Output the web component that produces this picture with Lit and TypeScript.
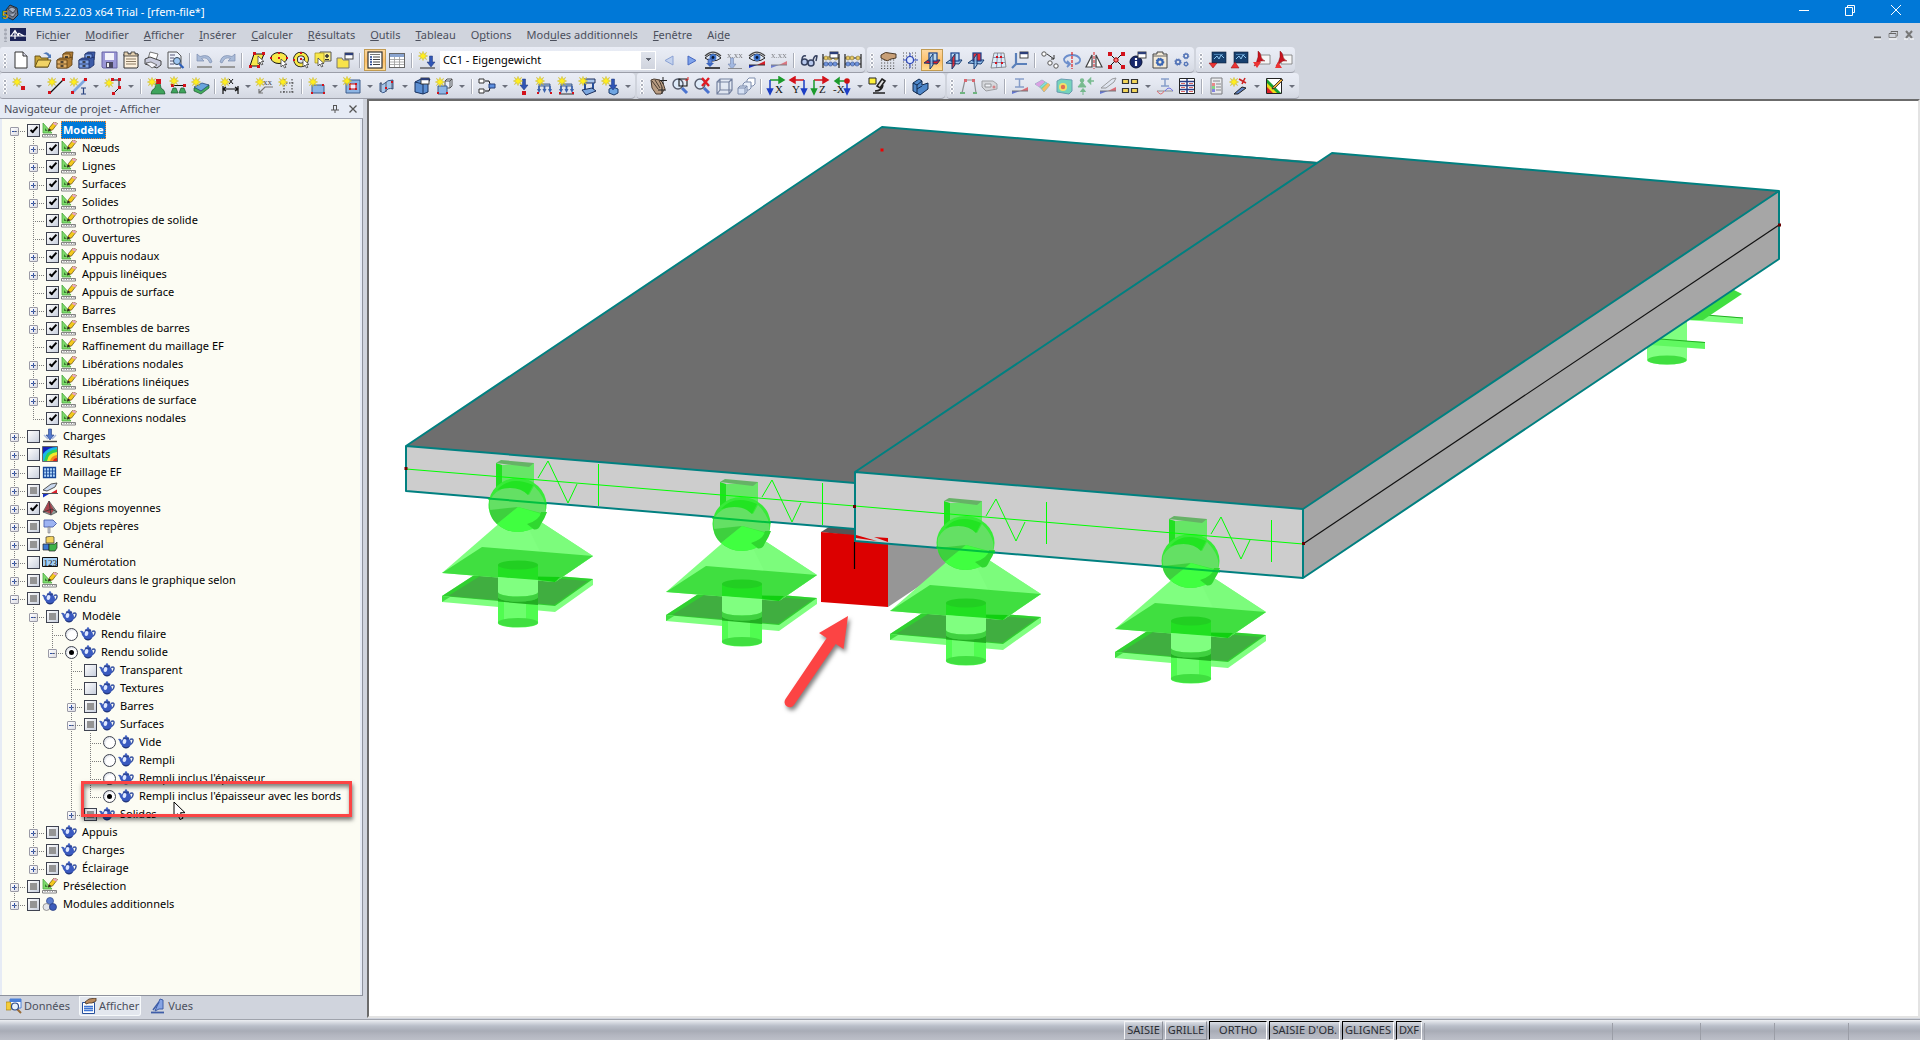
import { LitElement, html, css, svg, nothing } from "lit";
import type { TemplateResult, SVGTemplateResult } from "lit";
import { customElement, property, state } from "lit/decorators.js";
import { classMap } from "lit/directives/class-map.js";

type Art = SVGTemplateResult;

/* ---------- shared pieces of the toolbar glyphs (20 x 20 grid) ---------- */
const star = (x = 5, y = 5) => svg`<path transform="translate(${x} ${y})" d="M0-4.6L1-1.800 3.600-3.600 1.900-1 4.6 0 1.900 1 3.600 3.600 1 1.800 0 4.6-1 1.800-3.600 3.600-1.900 1-4.6 0-1.900-1-3.600-3.600-1-1.800z" fill="#ffee1e" stroke="#c9b62a" stroke-width=".5"/>`;
const red = (x: number, y: number, s = 3) => svg`<rect x=${x} y=${y} width=${s} height=${s} fill="#d3121b"/>`;
const cursor = (x: number, y: number) => svg`<path transform="translate(${x} ${y})" d="M0 0v8l2-2 1.500 3 1.400-.7L3.500 5.500H6z" fill="#fff" stroke="#444" stroke-width=".8"/>`;
const cabinet = (a: string, b: string, c: string) => svg`<path d="M8 4l3-2h7l-1 8-4 2H8z" fill=${b} stroke=${c} stroke-width=".8"/><path d="M8 4h7v6H8z" fill=${a} stroke=${c} stroke-width=".8"/><path d="M2 10l3-2h9l3-1v8l-4 3H2z" fill=${b} stroke=${c} stroke-width=".8"/><path d="M2 10h10v8H2z" fill=${a} stroke=${c} stroke-width=".8"/><path d="M2 14h10" stroke=${c} stroke-width=".8"/><path d="M5.500 12h3M5.500 16h3M10 7h3" stroke="#222" stroke-width="1.300"/>`;
const downArrow = (x: number, y: number, c = "#2f55b5") => svg`<path transform="translate(${x} ${y})" d="M-1.500 0h3v6h2.500L0 11-4 6h2.500z" fill=${c} stroke="#1c3474" stroke-width=".5"/>`;
const miniWin = (x: number, y: number) => svg`<rect x=${x} y=${y} width="8" height="6" fill="#fff" stroke="#333" stroke-width=".9"/><rect x=${x} y=${y} width="8" height="2.200" fill="#2c3e78"/>`;
const eye = (y = 8) => svg`<path d="M2 ${y}q8-8 16 0q-8 6-16 0z" fill="#dfe8f6" stroke="#222" stroke-width="1"/><circle cx="10" cy=${y - 0.5} r="3.400" fill="#3f74cc"/><circle cx="10" cy=${y - 0.5} r="1.400" fill="#081630"/><path d="M2 ${y - 2}q8-8 16 0" fill="none" stroke="#444" stroke-width="1.200"/>`;
const redBlue = (o = 1) => svg`<g opacity=${o}><path d="M2 18v-3l8 0z" fill="#1733c4"/><path d="M10 15l8-4v4z" fill="#d8202a"/><path d="M2 15h16" stroke="#333"/></g>`;
const loadFrame = svg`<path d="M5 8h11v2H5z" fill="#a9c6ec" stroke="#27406f" stroke-width=".8"/><path d="M5 10v4M10.500 10v4M16 10v4" stroke="#3b62ad" stroke-width="1.800"/><path d="M3 13h4l-2 4zM8.500 13h4l-2 4zM14 13h4l-2 4z" fill="#3b62ad"/>`;
const planes = (mode: number) => svg`<path d="M2 13l4-3h12l-3 4z" fill=${mode === 0 ? "#e01c24" : "#9cc7ef"} stroke="#14386f" stroke-width="1"/><rect x="7" y="3" width="8" height="8" fill=${mode === 2 ? "#e01c24" : "#b7d8f5"} fill-opacity=".9" stroke="#16408c" stroke-width="1.200"/><path d="M8 8l3-4v11l-3 4z" fill=${mode === 1 ? "#e01c24" : "#8fc1ee"} fill-opacity=".85" stroke="#14386f" stroke-width="1"/>`;
const abacus = svg`<path d="M2 4v14M18 4v14M2 8h16M2 14h16" stroke="#222" stroke-width="1.200" fill="none"/><g fill="#e7c964" stroke="#6b5a1c" stroke-width=".5"><circle cx="5" cy="8" r="2"/><circle cx="9" cy="8" r="2"/><circle cx="15" cy="8" r="2"/></g><g fill="#6f94dd" stroke="#233c7c" stroke-width=".5"><circle cx="5" cy="14" r="2.100"/><circle cx="9.500" cy="14" r="2.100"/><circle cx="14" cy="14" r="2.100"/></g>`;
const axis = (label: string, h: string, v: string, flip = false) => svg`<path d=${flip ? "M16 4H4M7 1L2 4l5 3z" : "M4 4h11M13 1l5 3-5 3z"} fill=${h} stroke=${h} stroke-width="1.500"/><path d=${flip ? "M16 4v12M13.500 13l2.500 5 2.500-5z" : "M4 4v12M1.500 13L4 18l2.500-5z"} fill=${v} stroke=${v} stroke-width="1.500"/><text x=${flip ? 4 : 9} y="17" font-size="11" font-family="Liberation Serif, serif" fill="#111">${label}</text>`;
const blueprint = (up: boolean) => svg`<rect x="5" y="2" width="14" height="11" fill="#17406f" stroke="#0a1d38" stroke-width=".6"/><path d="M7 9l3-3 2 3 2-4 3 3" stroke="#8fc8f2" fill="none"/><path d="M7 4.500h9" stroke="#5f9bd0" stroke-width=".7"/>${up ? svg`<path d="M2 18l4-6 4 6z" fill="#e33" stroke="#811" stroke-width=".5"/>` : svg`<path d="M2 13h8l-4 5z" fill="#e33" stroke="#811" stroke-width=".5"/>`}`;
const pdf = (up: boolean) => svg`<path d="M8 5h11v9H8z" fill="#f6f6f6" stroke="#777" stroke-width=".8"/><path d="M7 1q3 2 3 5t4 5q-4-1-7 2-2 3-4 3 3-4 4-9z" fill="#c81420" stroke="#700" stroke-width=".4"/>${up ? svg`<path d="M2 18l3-6 4 6z" fill="#e33"/>` : svg`<path d="M2 12h8l-4 6z" fill="#e33"/>`}`;
const gear = (x: number, y: number, r: number, c: string) => svg`<circle cx=${x} cy=${y} r=${r} fill="none" stroke=${c} stroke-width=${r * 0.8}/><circle cx=${x} cy=${y} r=${r * 1.4} fill="none" stroke=${c} stroke-width=${r * 0.5} stroke-dasharray="1.300 1.100"/>`;
const magnifier = svg`<path d="M12 12l5 5" stroke="#4b74cf" stroke-width="3"/><circle cx="8" cy="8" r="5" fill="#dcebfb" fill-opacity=".8" stroke="#555b6b" stroke-width="1.400"/>`;
const xx = (o = 1) => svg`<text x="2" y="8" font-size="9" font-family="Liberation Serif, serif" fill="#333" opacity=${o}>x.xx</text>`;

/* ---------- toolbar glyphs ---------- */
const art: Record<string, Art> = {
  new: svg`<path d="M4 2h8l4 4v12H4z" fill="#fff" stroke="#333"/><path d="M12 2v4h4" fill="#dde" stroke="#333"/>`,
  open: svg`<path d="M2 17V6h5l1 2h7v9z" fill="#caa637" stroke="#5d4a12" stroke-width=".9"/><path d="M2 17l3-7h13l-3 7z" fill="#f1d366" stroke="#5d4a12" stroke-width=".9"/><path d="M10 4q4-4 7 1l1-1v4h-4l1.500-1.500Q13 3 10 4z" fill="#4d78b8"/>`,
  cabA: cabinet("#e0ae66", "#b07c34", "#5c3d12"),
  cabB: cabinet("#7ea3e8", "#3c5ba8", "#1d2f66"),
  save: svg`<path d="M3 2h15v16H4l-1-1z" fill="#9a97d6" stroke="#6a66a6"/><path d="M6 3h9v7H6z" fill="#f2f2fa"/><path d="M7 12h7v6H7z" fill="#4a4862"/><path d="M8 13h2v4H8z" fill="#eee"/>`,
  notes: svg`<path d="M3 4h14v13l-1 1H3z" fill="#fdf0dc" stroke="#333"/><path d="M3 2h4v2h3V2h4v2h3v2H3z" fill="#e4d0b0" stroke="#333" stroke-width=".8"/><path d="M5 9h10M5 11.500h10M5 14h10" stroke="#8a7a63" stroke-width="1"/>`,
  print: svg`<path d="M5 9l2-7 8 2-2 6z" fill="#fff" stroke="#555" stroke-width=".8"/><path d="M2 9l5-2 11 4v4l-4 3-12-4z" fill="#c9cbdd" stroke="#444"/><path d="M3 13l6 5 5-3-6-3z" fill="#f4f4fa" stroke="#555" stroke-width=".8"/>`,
  preview: svg`<path d="M3 2h9l4 4v12H3z" fill="#eef3fb" stroke="#555"/><path d="M5 5h5M5 8h4M5 11h3M5 14h4" stroke="#557" stroke-width="1"/><circle cx="12" cy="11" r="3.500" fill="#9dc6f2" stroke="#345"/><path d="M14.500 14l4 4" stroke="#2e60bb" stroke-width="2.200"/>`,
  undo: svg`<path d="M2 4v7h7L6.500 8.500Q12 6 15 13l2-1Q15 3 5 6.500z" fill="#a9bbd8" stroke="#7b8daf" stroke-width=".7"/><path d="M2 17h15" stroke="#999" stroke-width="2"/>`,
  redo: svg`<path d="M18 4v7h-7l2.500-2.500Q8 6 5 13l-2-1Q5 3 15 6.500z" fill="#a9bbd8" stroke="#7b8daf" stroke-width=".7"/><path d="M3 17h15" stroke="#999" stroke-width="2"/>`,
  selPoly: svg`<path d="M7 4h10l-5 12H3z" fill="#f8e84b" stroke="#111"/>${red(6, 2)}${red(15, 2)}${red(2, 15)}${red(10, 15)}${cursor(11, 6)}`,
  selEll: svg`<ellipse cx="10" cy="8" rx="8" ry="5.500" fill="#f8e84b" stroke="#111"/>${red(9, 2, 2)}${red(1, 7, 2)}${red(9, 7, 2)}${red(17, 7, 2)}${cursor(12, 9)}`,
  selRing: svg`<circle cx="10" cy="9.500" r="5.500" fill="none" stroke="#111" stroke-width="4.600"/><circle cx="10" cy="9.500" r="5.500" fill="none" stroke="#f8e84b" stroke-width="3"/>${red(9, 8, 2)}${red(9, 2, 2)}${red(2, 9, 2)}${cursor(12, 9)}`,
  selPm: svg`<path d="M7 2h11v9H7z" fill="#faf08a" stroke="#555"/><path d="M12 6h4M14 4v4M12 9.500h4" stroke="#333"/><path d="M2 3h9v10H2z" fill="#f8e84b" stroke="#a8962a" stroke-width=".8"/><path d="M12 6h4M14 4v4M12 9.500h4" stroke="#333"/>${cursor(5, 8)}`,
  selWin: svg`<path d="M2 8h5l1 2h6v8H2z" fill="#f8e34b" stroke="#777"/>${miniWin(10, 3)}`,
  navPane: svg`<rect x="3" y="2" width="14" height="16" fill="#fff" stroke="#333" stroke-width="1.200"/><path d="M5 7h2M5 9.500h2M5 12h2M5 14.500h2" stroke="#1b3b8a" stroke-width="1.300"/><path d="M8 7h7M8 9.500h7M8 12h7M8 14.500h7" stroke="#444"/><path d="M5 4.500h10" stroke="#777"/>`,
  tablePane: svg`<rect x="2.500" y="3.500" width="15" height="14" fill="#fff" stroke="#666"/><path d="M3 4h14v3H3z" fill="#8aa4cf"/><path d="M3 9.500h14M3 12h14M3 14.500h14M7.500 7v10M12.500 7v10" stroke="#999" stroke-width=".8"/>`,
  newLc: svg`${star(6, 6)}${downArrow(14, 6)}<path d="M3 18h15" stroke="#444" stroke-width="1.200"/>`,
  prev: svg`<path d="M14 6v9l-8-4.500z" fill="#c3d2ee" stroke="#8ba2d4"/>`,
  next: svg`<path d="M7 6v9l8-4.500z" fill="#7fa3ec" stroke="#4668c0"/>`,
  eyeLoad: svg`${eye(8)}<path d="M5 9h4v5h-4z" fill="#5d86d8" stroke="#1c3474" stroke-width=".5"/><path d="M3 13h8l-4 4z" fill="#3b66c0"/><path d="M2 18h15" stroke="#111" stroke-width="1.500"/>`,
  valLoad: svg`<g opacity=".6">${xx()}${downArrow(7, 8, "#7d9fdc")}<path d="M3 18.500h14" stroke="#555"/></g>`,
  eyeRes: svg`${eye(8)}${redBlue()}`,
  valRes: svg`<g opacity=".55">${xx()}${redBlue()}</g>`,
  glasses: svg`<circle cx="5.500" cy="12" r="3" fill="#b7c8ec" stroke="#36415f" stroke-width="1.500"/><circle cx="12" cy="13" r="3" fill="#b7c8ec" stroke="#36415f" stroke-width="1.500"/><path d="M3 10Q3 5 7 6M14 11q1-6 4-5l-1 5" fill="none" stroke="#36415f" stroke-width="1.500"/>`,
  calcWin: svg`${abacus}${miniWin(9, 2)}`,
  calc: abacus,
  gridHand: svg`<path d="M3 10h15M3 13h15M3 16h15M3 18.500h15" stroke="#555" stroke-width="1" stroke-dasharray="1.200 1.800"/><path d="M3 5q5-4 8-2l7 1v4l-5 1q-4 3-6 1L3 8z" fill="#c79f77" stroke="#3b2a1a" stroke-width=".9"/>`,
  snapGrid: svg`<path d="M3 3h15M3 6h15M3 9h15M3 12h15M3 15h15M3 18h15" stroke="#555" stroke-width="1" stroke-dasharray="1 2"/><circle cx="10" cy="10" r="3.500" fill="#dfe9ff" stroke="#2d46b8" stroke-width="1.200"/><path d="M10 3v4M10 13v5M3 10h4M13 10h5" stroke="#2d46b8" stroke-width="1"/>`,
  wpXY: planes(0),
  wpYZ: planes(1),
  wpXZ: planes(2),
  gridWarp: svg`<path d="M6 3h10l2 14-15 1z" fill="#dcecf8" stroke="#777" stroke-width=".8"/><path d="M9.500 3l-1 15M13 3l.5 14.500M5 7.500h11.500M4 12.500h13" stroke="#779" stroke-width=".8"/>${red(8, 6, 2)}${red(12, 6, 2)}${red(7, 12, 2)}${red(13, 12, 2)}`,
  ucs: svg`<path d="M6 3v11h11M6 14l-4 4" fill="none" stroke="#5a80ba" stroke-width="2.200"/>${miniWin(10, 2)}`,
  nodes: svg`<circle cx="4" cy="4" r="2.200" fill="#fff" stroke="#555"/><circle cx="10" cy="13" r="2.200" fill="#fff" stroke="#555"/><circle cx="16" cy="16" r="2.200" fill="#fff" stroke="#555"/><path d="M7 4l7 5M11 9h3V5" fill="none" stroke="#333"/>`,
  rotate: svg`<path d="M13 14q6-1 5-5-2-4-8-4T2 9q0 4 5 5M5 11l3 3-3 3" fill="none" stroke="#6d8fcc" stroke-width="1.800"/><path d="M10 2v17" stroke="#d22" stroke-width="1.200" stroke-dasharray="3 1"/>`,
  mirror: svg`<path d="M8 5v12H2zM12 5v12h6z" fill="#fff" stroke="#444" stroke-width="1.200"/><path d="M10 2v17" stroke="#d22" stroke-dasharray="3 1"/>`,
  connect: svg`<path d="M3 3l14 14M17 3L3 17" stroke="#111"/>${red(2, 2, 4)}${red(15, 2, 4)}${red(2, 15, 4)}${red(15, 15, 4)}<circle cx="10" cy="10" r="2.200" fill="#f77" stroke="#900"/>`,
  info: svg`<circle cx="8" cy="12" r="6" fill="#17286c" stroke="#0a1438"/><path d="M8 8v2M8 11v5" stroke="#fff" stroke-width="2.200"/>${miniWin(10, 2)}`,
  compGear: svg`<path d="M3 4h4V2h6v2h4v14H3z" fill="#f3ead8" stroke="#444"/><path d="M3 6h14" stroke="#666"/>${gear(10, 12, 2.6, "#3a66b4")}`,
  gears: svg`${gear(6, 12, 2.2, "#5676b8")}${gear(14, 6, 2, "#5676b8")}${gear(14, 14, 1.6, "#5676b8")}`,
  bpIn: blueprint(false),
  bpOut: blueprint(true),
  pdfIn: pdf(false),
  pdfOut: pdf(true),

  node: svg`${star(6, 6)}${red(10, 10, 4)}`,
  line: svg`${star(6, 6)}<path d="M4 17L17 4" stroke="#111" stroke-width="1.200"/>${red(2, 15)}${red(16, 2)}`,
  member: svg`${star(6, 6)}<path d="M5 16L17 4" stroke="#7fa6de" stroke-width="2.600"/>${red(3, 15)}${red(16, 2)}<path d="M13 12h5M15.500 12v6M13 18h5" stroke="#29427f" stroke-width="1.200" fill="none"/>`,
  arcs: svg`<path d="M8 4h8v8l-5 5" fill="none" stroke="#111"/>${star(6, 7)}${red(8, 2)}${red(15, 2)}${red(15, 10)}${red(9, 16)}`,
  nodSup: svg`<path d="M10 7h4l1 5q4 2 4 6H5q0-4 4-6z" fill="#3fa45c" stroke="#1d5a2e" stroke-width=".7"/>${red(10, 3, 5)}${star(6, 6)}`,
  lineSup: svg`<path d="M4 9.500h13" stroke="#111"/>${red(3, 8)}${red(15, 8)}<path d="M5 12h3l2 5H3zM13 12h3l2 5h-7z" fill="#3fa45c" stroke="#1d5a2e" stroke-width=".7"/>${star(6, 5)}`,
  surfSup: svg`<path d="M4 12v3l7 3 8-6V9z" fill="#43ad5c" stroke="#1d5a2e" stroke-width=".7"/><path d="M4 11l8-4 7 2-8 6z" fill="#6aa5dd" stroke="#1c3c6c" stroke-width=".7"/>${star(6, 6)}`,
  dim: svg`<path d="M3 10v8M18 10v8M3 13h15M6 11l-3 2 3 2M15 11l3 2-3 2" fill="none" stroke="#111" stroke-width="1.200"/><path d="M9 3l4 5M13 3L9 8" stroke="#111"/>${star(5, 6)}`,
  comment: svg`<path d="M18 11h-8l-6 6M4 13v4h4" fill="none" stroke="#777" stroke-width="1.200"/><text x="8" y="9" font-size="9" font-family="Liberation Serif, serif" fill="#444">xx</text>${star(5, 6)}`,
  guide: svg`<path d="M7 3v15M15 3v15M3 7h14M3 16h14" stroke="#333" stroke-dasharray="1.500 1.500"/>${star(6, 6)}`,
  rectSurf: svg`<path d="M5 9h12v8H5z" fill="#8db5e4" stroke="#3d5c8c"/>${red(15, 8, 2)}${red(4, 16, 2)}${red(16, 16, 2)}${star(6, 6)}`,
  opening: svg`<path d="M4 4h14v13H4z" fill="#8db5e4" stroke="#3d5c8c"/><path d="M8 8h6v5H8z" fill="#eef" stroke="#c11"/>${red(7, 7, 2)}${red(13, 7, 2)}${red(7, 12, 2)}${red(13, 12, 2)}${star(5, 5)}`,
  curved: svg`<path d="M3 7q3 3 5 0t8-3v9q-5-2-8 3-2 2-5-1z" fill="#a6c6ea" stroke="#3d5c8c"/><path d="M4 6v10M9 6v10M15 4v9" stroke="#445" stroke-width=".8"/>${red(8, 11, 2)}${red(14, 5, 2)}`,
  solid: svg`<path d="M3 6l6-3h9l-2 4v9l-5 2-8-2z" fill="#5c8fd2" stroke="#17315f"/><path d="M3 6l8 2v10" fill="none" stroke="#17315f"/>${miniWin(9, 2)}`,
  solids: svg`<path d="M11 5l2-2h5v7l-2 2h-5zM11 5h5v7M16 5l2-2" fill="#e8eef8" stroke="#444" stroke-width=".9"/><path d="M4 10h9v8H4z" fill="#8db5e4" stroke="#3d5c8c"/>${red(3, 16, 2)}${red(12, 16, 2)}${star(6, 6)}`,
  split: svg`<path d="M2 3h5v4H2zM2 13h5v4H2z" fill="#fff" stroke="#333"/><path d="M8 5h4l1 3M8 15h4l1-3" fill="none" stroke="#111"/><path d="M12 8h6v4h-6z" fill="#5c8fe0" stroke="#26417c"/>`,
  nodLoad: svg`${downArrow(12, 3)}${red(10, 15, 4)}${star(6, 5)}`,
  memLoad: svg`${loadFrame}${red(3, 16, 2)}${red(16, 16, 2)}${star(6, 5)}`,
  lineLoad: svg`${loadFrame}<path d="M3 18h15" stroke="#333"/>${red(3, 16, 2)}${red(16, 16, 2)}${star(6, 5)}`,
  surfLoad: svg`<path d="M6 3h11v4H6z" fill="#a9c6ec" stroke="#1c2f5c"/><path d="M7 7v6M15 7v6" stroke="#27509c" stroke-width="2"/><path d="M4 14l10-2 4 3-10 4z" fill="#7ba7e0" stroke="#1c2f5c"/>${star(5, 5)}`,
  solLoad: svg`<path d="M9 13l4-2 5 2v4l-4 2-5-2z" fill="#6ea5e2" stroke="#1c3c6c"/>${downArrow(13, 3)}${star(6, 5)}`,
  hand: svg`<path d="M3 4l3-1 6 1 3 3 2 6-4 5H8l-4-6z" fill="#b89c82" stroke="#4a3c30"/><path d="M4 5l6 8M7 4l5 8M11 4l3 7" stroke="#4a3c30"/><path d="M15 1v7M12 4.500h7M10 14h8M14 11v7" stroke="#222"/>`,
  zoomWin: svg`${magnifier}<path d="M9 3h8v7H9z" fill="none" stroke="#111" stroke-width="1.100"/><path d="M18 1v3h-3" stroke="#d22" fill="none"/>`,
  zoomX: svg`${magnifier}<path d="M10 2l7 8M17 2l-7 8" stroke="#e01c24" stroke-width="2.400"/>`,
  cube: svg`<path d="M3 6l3-3h12v11l-3 4H3zM3 6h12v12M15 6l3-3M6 3v11h12M6 14l-3 4" fill="#e4ebf8" fill-opacity=".5" stroke="#74819f" stroke-width="1.200"/>`,
  isoView: svg`<path d="M11 4l2-2h6v6l-2 2h-6z" fill="#fff" stroke="#7d8cac"/><path d="M7 8l2-2h6v6l-2 2H7z" fill="#e9eff9" stroke="#7d8cac"/><path d="M2 12l2-2h7v6l-2 2H2zM2 12h7v6M9 12l2-2" fill="#d6e1f4" stroke="#7d8cac"/>`,
  axX: axis("X", "#1c9a2c", "#1d3fc4"),
  axY: axis("Y", "#d3121b", "#1d3fc4", true),
  axZ: axis("Z", "#d3121b", "#1c9a2c"),
  axMX: svg`<path d="M14 5H5M7 2L3 5l4 3z" fill="#1c9a2c" stroke="#1c9a2c" stroke-width="1.500"/><path d="M15 5v11M12.500 13l2.500 5 2.500-5z" fill="#1d3fc4" stroke="#1d3fc4" stroke-width="1.500"/><circle cx="15" cy="5" r="2.800" fill="#c11"/><text x="1" y="17" font-size="11" font-family="Liberation Serif, serif" fill="#111">-X</text>`,
  scope: svg`<path d="M2 2h7v6H2z" fill="#fff23a" stroke="#222"/><path d="M15 3l3 2-5 7-3-2zM6 17h12M8 15q7 0 8-6" fill="#ddd" stroke="#222" stroke-width="1.600"/>`,
  lshape: svg`<path d="M3 7l6-4 3 2v4l6-2v6l-8 6-7-4z" fill="#4f88ca" stroke="#11294c"/><path d="M3 7l4 2v9M7 9l5-4M7 13l5-3" stroke="#11294c" fill="none"/>`,
  frame: svg`<g opacity=".6"><path d="M4 17L7 4h9l2 13" fill="none" stroke="#555" stroke-width="1.200"/>${red(6, 3)}${red(14, 3)}<path d="M2 17h5M15 17h4" stroke="#2a9a3c" stroke-width="2"/></g>`,
  player: svg`<g opacity=".55"><path d="M2 5h11l4 3v5l-11 2-4-4z" fill="#ccc" stroke="#666"/><path d="M5 8h6v3H5z" fill="#fff" stroke="#555"/><circle cx="14" cy="11" r="1.500" fill="#c33"/></g>`,
  resMem: svg`<g opacity=".6"><path d="M5 3h9M9.500 3v8M5 11h9" stroke="#4a6eb0" stroke-width="1.500"/>${redBlue()}</g>`,
  resSurf: svg`<g opacity=".75"><path d="M3 8l7-4 8 5-6 7q-3-5-9-8z" fill="#5bd36b" stroke="#68a" stroke-width=".7"/><path d="M3 8l7-4 3 2-6 5z" fill="#d78ae0"/><path d="M10 13l6-6 2 2-6 7z" fill="#ffb03c"/><path d="M8 11l6-5 1 1-6 5z" fill="#6ad0f0"/></g>`,
  resSol: svg`<g opacity=".8"><path d="M3 5l4-2 11 1v11l-3 3-12-2z" fill="#5bd0b0" stroke="#4a8aa0"/><circle cx="9" cy="11" r="4" fill="#f5e04a"/><circle cx="9" cy="11" r="2.200" fill="#e3542c"/></g>`,
  resSup: svg`<g opacity=".65"><circle cx="6" cy="4.500" r="2.200" fill="#3fa45c"/><path d="M6 6l4 5H2zM7 19v-4M4.500 15.500L7 12.500l2.500 3z" fill="#3fa45c" stroke="#3fa45c"/><path d="M13 5h5M14.500 2.500L12 5l2.500 2.500z" fill="#3fa45c" stroke="#3fa45c" stroke-width="1.500"/></g>`,
  resSec: svg`<g opacity=".6"><path d="M3 12L14 3l4-1-2 4-8 6z" fill="#dfe5f1" stroke="#666"/>${redBlue()}</g>`,
  panels: svg`<g fill="#f3d65a" stroke="#333" stroke-width="1.200"><path d="M2.500 3.500h6v4h-6zM11.500 3.500h6v4h-6zM2.500 12.500h6v4h-6zM11.500 12.500h6v4h-6z"/></g>`,
  resDiag: svg`<g opacity=".6"><path d="M6 3h8M10 3v7M6 10h8" stroke="#4a6eb0" stroke-width="1.500"/><path d="M2 15h16" stroke="#555"/><path d="M2 15q4 6 7 0" fill="none" stroke="#d22"/><path d="M10 15q4-6 8 0" fill="none" stroke="#22d"/></g>`,
  resTab: svg`<path d="M2.500 2.500h15v15h-15z" fill="#fff" stroke="#222"/><path d="M3 5.500h14M3 9.500h14M3 13.500h14M10 3v14" stroke="#2a3c84" stroke-width="1.500"/><path d="M4 7.500h4M12 7.500h4M4 11.500h4M12 11.500h4M4 15.500h4M12 15.500h4" stroke="#d66" stroke-width="1"/>`,
  legend: svg`<g opacity=".65"><path d="M4 2h11v16H4z" fill="#eee" stroke="#444"/><path d="M6 5h7M9 8h5M9 11h5M9 14h5" stroke="#555"/><path d="M5 7h3v3H5z" fill="#e55"/><path d="M5 10h3v3H5z" fill="#5c5"/><path d="M5 13h3v3H5z" fill="#55d"/></g>`,
  wand: svg`<path d="M5 18l8-7 4 1-8 6z" fill="#5d80c0" stroke="#222"/><path d="M10 3l7 4M13 8l3-6" fill="none" stroke="#c22" stroke-width="1.600"/>${star(5, 6)}`,
  colors: svg`<path d="M2.500 2.500h15v15h-15z" fill="#fff" stroke="#222"/><path d="M3 3l14 14h-5L3 8z" fill="#18a030"/><path d="M3 7l10 10H8l-5-5z" fill="#f0d818"/><path d="M3 11l6 6H3z" fill="#d8202a"/><path d="M17 3L9 11l-1 2 3-1 8-8z" fill="#f3b13a" stroke="#222" stroke-width=".8"/>`,
};

/* ---------- tree glyphs (16 x 16 grid) ---------- */
const treeArt: Record<string, Art> = {
  draw: svg`<path d="M1 1v10h9z" fill="#7ddb6a" stroke="#4aa63f" stroke-width=".8"/><path d="M3 6v3h2.500z" fill="#3a7a34"/><path d="M6 9l1.500-3.500L12 0l3.500 1.500-5 6.500z" fill="#f4c91c" stroke="#5d4a12" stroke-width=".7"/><path d="M12 0l3.500 1.500L14 3.500 11 2z" fill="#e9a7c6"/><path d="M6 9.500l1-3 2.500 1.500z" fill="#222"/><path d="M.5 12.500h14v2.500H.5z" fill="#fff" stroke="#777" stroke-width=".9"/><path d="M3 13v1M5.500 13v1M8 13v1M10.500 13v1M13 13v1" stroke="#777" stroke-width=".8"/>`,
  pot: svg`<path d="M0 5q3-1 4 2l1 4Q2 11 1.500 7z" fill="#3f5fbc"/><path d="M12 5.500q3.500-1.500 3 1.500T11.500 11" fill="none" stroke="#35509f" stroke-width="1.400"/><ellipse cx="8" cy="9" rx="5" ry="4.800" fill="#3a5ac0"/><path d="M4 11.500q4 3 8 0-1 3-4 3t-4-3z" fill="#22367c"/><ellipse cx="8" cy="4.200" rx="3.200" ry="1.300" fill="#2c4597"/><circle cx="8" cy="2.400" r="1.200" fill="#4666c8"/><ellipse cx="6.500" cy="7.500" rx="1.800" ry="2.600" fill="#dfe8ff" transform="rotate(15 6.500 7.500)"/>`,
  load: svg`<path d="M6.500 1h3v6H12L8 12 4 7h2.500z" fill="#5379cc" stroke="#243c80" stroke-width=".6"/><path d="M2 7l4 4M14 7l-4 4" stroke="#a9badf" stroke-width="1.500"/><path d="M1 13.500h14" stroke="#444" stroke-width="1.400"/>`,
  rainbow: svg`<path d="M.5.5h15v15H.5z" fill="#1423b8" stroke="#666"/><path d="M1 15V8Q6 1 15 1v14z" fill="#17b6e8"/><path d="M2 15Q4 4 15 3v12z" fill="#2fd053"/><path d="M5 15Q6 7 15 6v9z" fill="#f2ea2e"/><path d="M8 15q1-5 7-6v6z" fill="#f58a1e"/><path d="M11 15q1-3 4-3v3z" fill="#df1f1f"/>`,
  mesh: svg`<path d="M1.500 3.500h12v10h-12z" fill="#aed4f8" stroke="#15479a" stroke-width="1.300"/><path d="M4.500 3.500v10M7.500 3.500v10M10.500 3.500v10M1.500 7h12M1.500 10h12" stroke="#15479a" stroke-width=".9"/>`,
  cut: svg`<path d="M1 8L9 2l6-1-2 4-8 4z" fill="#c9d8ef" stroke="#444" stroke-width=".9"/><path d="M1 15.500V12h6z" fill="#1733c4"/><path d="M9 11l6-3.500V11z" fill="#d8202a"/><path d="M0 11.500h16" stroke="#555"/>`,
  pyramid: svg`<path d="M7 1l8 11-6 3-8-3z" fill="#8d9f9a" stroke="#555" stroke-width=".8"/><path d="M7 1l5 9-3 4-7-3z" fill="#a9434c"/><path d="M7 1l2 14M1 12l9-3 5 3" fill="none" stroke="#333" stroke-width=".8"/>`,
  sign: svg`<path d="M2 2h9l3.500 3.500L11 9H2z" fill="#9db4f2" stroke="#4a61ab" stroke-width=".9"/><path d="M6 9h2v6H6z" fill="#c6cad6" stroke="#777" stroke-width=".6"/>`,
  blocks: svg`<path d="M4 1l6-1 2 1v6H4z" fill="#f4d35e" stroke="#333" stroke-width=".7"/><path d="M1 8h6v6H1z" fill="#3c78d2" stroke="#222" stroke-width=".7"/><path d="M7 8h6l2-2v6l-2 3H7z" fill="#3fb24a" stroke="#222" stroke-width=".7"/>`,
  num: svg`<path d="M.5 3.500h15v9H.5z" fill="#a5d0f5" stroke="#111"/><text x="1.500" y="11.500" font-size="9" font-family="Liberation Serif, serif" fill="#111">123</text>`,
  modules: svg`<circle cx="8" cy="5" r="3.500" fill="#5d7fd0" stroke="#2b438c" stroke-width=".7"/><circle cx="4.500" cy="11" r="3.500" fill="#e3e5ea" stroke="#777" stroke-width=".7"/><circle cx="11" cy="11" r="3.500" fill="#3d5cba" stroke="#23377a" stroke-width=".7"/>`,
  data: svg`<path d="M4 1h11v9H4z" fill="#fff" stroke="#4a80d8"/><path d="M4 1h11v3H4z" fill="#4a80d8"/><path d="M0 4h4l1 1v7H0z" fill="#f4cd3a" stroke="#a87f16" stroke-width=".7"/><path d="M11 11l4 4" stroke="#9a6b35" stroke-width="2"/><circle cx="9" cy="8.500" r="3.500" fill="#e8f2fc" stroke="#2f4b86" stroke-width="1.200"/>`,
  show: svg`<path d="M1.500 4.500h12v11h-12z" fill="#fff" stroke="#27509c"/><path d="M3 8.500h9M3 10.500h9M3 12.500h9" stroke="#3d74d4" stroke-width="1.300"/><path d="M4 4l4-3 7-1v3l-4 2H8L5 6z" fill="#b98a5e" stroke="#4b3520" stroke-width=".8"/>`,
  views: svg`<path d="M10 1l3 1v9H9L5 13z" fill="#86a4e4" stroke="#3f5ea8"/><path d="M1 14.500h13" stroke="#3f5ea8" stroke-width="1.800"/><path d="M9 4L3 12" stroke="#3f5ea8" stroke-width="1.600"/>`,
};

/* ---------- navigator tree ---------- */
type Mark = "on" | "off" | "mixed" | "radio" | "radio-on";
interface Item {
  text: string;
  mark: Mark;
  icon: string;
  closed?: boolean;
  kids?: Item[];
  callout?: boolean;
  active?: boolean;
}
const it = (text: string, mark: Mark, icon: string, more: Partial<Item> = {}): Item => ({ text, mark, icon, ...more });
const plus = { closed: true };

const tree: Item[] = [
  it("Modèle", "on", "draw", {
    active: true,
    kids: [
      it("Nœuds", "on", "draw", plus),
      it("Lignes", "on", "draw", plus),
      it("Surfaces", "on", "draw", plus),
      it("Solides", "on", "draw", plus),
      it("Orthotropies de solide", "on", "draw"),
      it("Ouvertures", "on", "draw"),
      it("Appuis nodaux", "on", "draw", plus),
      it("Appuis linéiques", "on", "draw", plus),
      it("Appuis de surface", "on", "draw"),
      it("Barres", "on", "draw", plus),
      it("Ensembles de barres", "on", "draw", plus),
      it("Raffinement du maillage EF", "on", "draw"),
      it("Libérations nodales", "on", "draw", plus),
      it("Libérations linéiques", "on", "draw", plus),
      it("Libérations de surface", "on", "draw", plus),
      it("Connexions nodales", "on", "draw"),
    ],
  }),
  it("Charges", "off", "load", plus),
  it("Résultats", "off", "rainbow", plus),
  it("Maillage EF", "off", "mesh", plus),
  it("Coupes", "mixed", "cut", plus),
  it("Régions moyennes", "on", "pyramid", plus),
  it("Objets repères", "mixed", "sign", plus),
  it("Général", "mixed", "blocks", plus),
  it("Numérotation", "off", "num", plus),
  it("Couleurs dans le graphique selon", "mixed", "draw", plus),
  it("Rendu", "mixed", "pot", {
    kids: [
      it("Modèle", "mixed", "pot", {
        kids: [
          it("Rendu filaire", "radio", "pot"),
          it("Rendu solide", "radio-on", "pot", {
            kids: [
              it("Transparent", "off", "pot"),
              it("Textures", "off", "pot"),
              it("Barres", "mixed", "pot", plus),
              it("Surfaces", "mixed", "pot", {
                kids: [
                  it("Vide", "radio", "pot"),
                  it("Rempli", "radio", "pot"),
                  it("Rempli inclus l'épaisseur", "radio", "pot"),
                  it("Rempli inclus l'épaisseur avec les bords", "radio-on", "pot", { callout: true }),
                ],
              }),
              it("Solides", "mixed", "pot", plus),
            ],
          }),
        ],
      }),
      it("Appuis", "mixed", "pot", plus),
      it("Charges", "mixed", "pot", plus),
      it("Éclairage", "mixed", "pot", plus),
    ],
  }),
  it("Présélection", "mixed", "draw", plus),
  it("Modules additionnels", "mixed", "modules", plus),
];

@customElement("nav-tree")
export class NavTree extends LitElement {
  static styles = css`
    :host {
      display: block;
      background: #fcfcf3;
      padding: 2px 0 0 3px;
      color: #000;
    }
    .row {
      display: flex;
      height: 18px;
      position: relative;
      white-space: nowrap;
    }
    .cell {
      width: 19px;
      flex: none;
      background: repeating-linear-gradient(#7d7d7d 0 1px, transparent 1px 2px) 9px 0 / 1px 100% no-repeat;
    }
    .cell.blank {
      background: none;
    }
    .cell.own {
      display: grid;
      grid-template-rows: 10px 8px;
      background: none;
      position: relative;
    }
    .cell.own i {
      background: repeating-linear-gradient(#7d7d7d 0 1px, transparent 1px 2px) 9px 0 / 1px 100% no-repeat;
    }
    .cell.own .none {
      background: none;
    }
    .cell.own .down {
      grid-row: 2;
    }
    .arm {
      position: absolute;
      top: 10px;
      margin-left: -10px;
      width: 12px;
      height: 1px;
      background: repeating-linear-gradient(90deg, #7d7d7d 0 1px, transparent 1px 2px);
    }
    .twist {
      position: absolute;
      left: 5px;
      top: 6px;
      width: 9px;
      height: 9px;
      padding: 0;
      border: 1px solid #9a9aa6;
      border-radius: 1px;
      background:
        linear-gradient(#2c4fa8, #2c4fa8) 50% 50% / 5px 1px no-repeat,
        linear-gradient(135deg, #fff, #dcdce4);
      box-sizing: border-box;
    }
    .twist.closed {
      background:
        linear-gradient(#2c4fa8, #2c4fa8) 50% 50% / 5px 1px no-repeat,
        linear-gradient(#2c4fa8, #2c4fa8) 50% 50% / 1px 5px no-repeat,
        linear-gradient(135deg, #fff, #dcdce4);
    }
    label {
      display: flex;
      align-items: center;
      padding-left: 3px;
    }
    input {
      appearance: none;
      flex: none;
      width: 13px;
      height: 13px;
      margin: 0 2px 0 0;
      border: 1px solid #3f4350;
      background: linear-gradient(135deg, #fdfdfd, #c9d0de);
      display: grid;
      place-items: center;
    }
    input[type="radio"] {
      border-radius: 50%;
      background: radial-gradient(circle at 60% 60%, #fff 45%, #b9c1d2);
    }
    input[type="checkbox"]:checked::before {
      content: "";
      width: 8px;
      height: 4px;
      border: solid #000;
      border-width: 0 0 2px 2px;
      rotate: -48deg;
      translate: 0 -1px;
      box-sizing: border-box;
    }
    input[type="checkbox"]:indeterminate::before {
      content: "";
      width: 7px;
      height: 7px;
      background: #949494;
    }
    input[type="radio"]:checked::before {
      content: "";
      width: 5px;
      height: 5px;
      border-radius: 50%;
      background: #000;
    }
    svg {
      flex: none;
      width: 16px;
      height: 16px;
    }
    .text {
      margin-left: 3px;
      padding: 0 2px;
      line-height: 18px;
    }
    .text.active {
      background: #0078d7;
      color: #fff;
      font-weight: 700;
      outline: 1px dotted #ff8728;
      outline-offset: -1px;
    }
    .callout {
      position: absolute;
      left: 76px;
      top: -6px;
      z-index: 2;
      width: 271px;
      height: 36px;
      box-sizing: border-box;
      border: 3px solid #fb4444;
      box-shadow: 1px 3px 4px rgba(0, 0, 0, 0.5), inset 1px 3px 4px rgba(0, 0, 0, 0.5);
      pointer-events: none;
    }
    .pointer {
      position: absolute;
      left: 168px;
      top: 14px;
      z-index: 1;
      width: 14px;
      height: 20px;
    }
  `;

  private serial = 0;

  private row(item: Item, rails: boolean[], first: boolean, last: boolean, group: string): TemplateResult {
    const radio = item.mark.startsWith("radio");
    const id = `n${this.serial++}`;
    const root = rails.length === 0;
    const twisty = item.closed || item.kids;
    return html`<div class="row">
      ${rails.map((on) => html`<span class=${classMap({ cell: true, blank: !on })}></span>`)}
      <span class="cell own">
        <i class=${classMap({ none: root && first })}></i>
        <i class=${classMap({ down: true, none: last })}></i>
        ${twisty
          ? html`<button class=${classMap({ twist: true, closed: !!item.closed })} aria-label=${item.text}></button>`
          : nothing}
      </span>
      <span><span class="arm"></span></span>
      <label for=${id}>
        <input
          id=${id}
          type=${radio ? "radio" : "checkbox"}
          name=${radio ? group : id}
          .checked=${item.mark === "on" || item.mark === "radio-on"}
          .indeterminate=${item.mark === "mixed"}
        />
        <svg viewBox="0 0 16 16" aria-hidden="true">${treeArt[item.icon]}</svg>
        <span class=${classMap({ text: true, active: !!item.active })}>${item.text}</span>
      </label>
      ${item.callout
        ? html`<svg class="pointer" viewBox="0 0 14 20" aria-hidden="true">
              <path d="M1 1v15l3.500-3.200L7 18.500l3-1.300-2.500-5.500H12z" fill="#fff" stroke="#000" stroke-width="1" />
            </svg>
            <span class="callout"></span>`
        : nothing}
    </div>`;
  }

  private branch(items: Item[], rails: boolean[], group: string): TemplateResult[] {
    return items.flatMap((item, i) => {
      const last = i === items.length - 1;
      const own = this.row(item, rails, i === 0, last, group);
      return item.kids ? [own, ...this.branch(item.kids, [...rails, !last], `${group}-${i}`)] : [own];
    });
  }

  render() {
    this.serial = 0;
    return html`${this.branch(tree, [], "g")}`;
  }
}

/* ---------- toolbars ---------- */
@customElement("tool-strip")
export class ToolStrip extends LitElement {
  @property({ type: Array }) tools: string[] = [];

  static styles = css`
    :host {
      display: flex;
      align-items: center;
      height: 26px;
      border-radius: 3px 4px 4px 3px;
      border-bottom: 1px solid #9b9ea9;
      box-sizing: border-box;
      background: linear-gradient(#eaedf6, #e3e7f0 45%, #d4d8e2);
      padding: 1px 1px 0 0;
    }
    .grip {
      width: 10px;
      height: 15px;
      flex: none;
      background: radial-gradient(circle, #aeb2bd 1px, #fff 1px 1.500px, transparent 2px) 3px 0 / 4px 4px repeat-y;
    }
    .sep {
      width: 8px;
      height: 15px;
      flex: none;
      background: linear-gradient(90deg, #a9adb8 50%, #fff 50%) 3px 0 / 2px 100% no-repeat;
    }
    button {
      width: 22px;
      height: 22px;
      flex: none;
      padding: 0;
      border: 0;
      background: none;
      display: grid;
      place-items: center;
      font: inherit;
    }
    button.down {
      background: linear-gradient(#fcd9a4, #ffc069 55%, #ffe09a);
      box-shadow: inset 0 0 0 1px #c29b52;
    }
    button.drop {
      width: 13px;
    }
    .drop::before {
      content: "";
      border: 3px solid transparent;
      border-top-color: #6c707c;
      border-bottom: 0;
    }
    svg {
      width: 20px;
      height: 20px;
    }
    select {
      appearance: none;
      width: 216px;
      height: 19px;
      margin: 0 2px;
      padding: 0 2px;
      border: 1px solid #fff;
      border-radius: 0;
      font: inherit;
      color: #000;
      background:
        linear-gradient(#5f6470, #5f6470) 205px 6px / 5px 1px no-repeat,
        linear-gradient(#5f6470, #5f6470) 206px 7px / 3px 1px no-repeat,
        linear-gradient(#5f6470, #5f6470) 207px 8px / 1px 1px no-repeat,
        linear-gradient(#dfe3ec, #d0d4de) 100% 0 / 14px 100% no-repeat,
        #fff;
    }
  `;

  render() {
    return html`<span class="grip"></span>${this.tools.map((t) => {
        if (t === "|") return html`<span class="sep"></span>`;
        if (t === "v") return html`<button class="drop" aria-label="Plus"></button>`;
        if (t === "combo")
          return html`<select aria-label="Cas de charge">
            <option>CC1 - Eigengewicht</option>
          </select>`;
        const down = t.endsWith("!");
        const name = down ? t.slice(0, -1) : t;
        return html`<button class=${classMap({ down })} aria-label=${name}>
          <svg viewBox="0 0 20 20">${art[name]}</svg>
        </button>`;
      })}`;
  }
}

const strips = [
  [
    "new open cabA cabB save notes print preview | undo redo | selPoly selEll selRing selPm selWin | navPane! tablePane | newLc combo prev next eyeLoad valLoad eyeRes valRes | glasses calcWin calc",
    "gridHand snapGrid wpXY! wpYZ wpXZ gridWarp ucs | nodes rotate mirror connect info compGear gears",
    "bpIn bpOut pdfIn pdfOut",
  ],
  [
    "node v line member v arcs v | nodSup lineSup surfSup | dim v comment guide | rectSurf v opening v curved v solid solids v | split v nodLoad memLoad lineLoad surfLoad solLoad v",
    "hand zoomWin zoomX cube isoView | axX axY axZ axMX v scope v | lshape v",
    "frame player | resMem resSurf resSol resSup resSec panels v resDiag resTab | legend wand v colors v",
  ],
].map((row) => row.map((s) => s.split(" ")));

/* ---------- model view ---------- */
@customElement("model-view")
export class ModelView extends LitElement {
  static styles = css`
    :host {
      display: flex;
      background: #fff;
      border: 2px solid #e3e3e3;
      border-top-color: #6b6b6b;
      border-left-color: #6b6b6b;
      overflow: hidden;
    }
    svg {
      flex: 1;
      height: 0;
      min-height: 100%;
    }
    .edge {
      fill: none;
      stroke: #008080;
      stroke-width: 2;
      stroke-linejoin: round;
    }
    .thin {
      fill: none;
      stroke: #00ff00;
      stroke-width: 1;
    }
    .cross {
      stroke: #00c040;
      stroke-width: 2;
    }
    .shade {
      filter: drop-shadow(2px 3px 2px rgba(0, 0, 0, 0.5));
    }
  `;

  /* One nodal support; edge is the height at which the slab edge crosses the ball. */
  private support(dx: number, dy: number, edge: number) {
    return svg`<g transform="translate(${dx} ${dy})">
      <path d="M442 596L482 570 593 579V585L555 612 442 602z" fill="#80ff80"/>
      <path d="M442 596L482 570 593 579 555 606z" fill="#30d030"/>
      <path d="M448 596L485 573 588 581 554 605z" fill="#40ae40"/>
      <path d="M442 596v6l8-5z" fill="#40df40"/>
      <path d="M518 507L593 556 555 582 442 573z" fill="#80ff80"/>
      <path d="M518 507L593 556 555 582z" fill="#7cfc7c"/>
      <path d="M442 573L482 547 593 556 555 582z" fill="#40df40"/>
      <path d="M511 576L560 577 555 582z" fill="#10d010"/>
      <path d="M498 565v58a20 4.500 0 0 0 40 0v-58z" fill="#50fc50"/>
      <path d="M504 598v28h22v-28z" fill="#80ff80" fill-opacity=".6"/>
      <path d="M498 565v12l40 4v-16z" fill="#22e022"/>
      <path d="M498 577v15a20 4.500 0 0 0 40 0v-12z" fill="#80ff80"/>
      <path d="M498 592a20 4.500 0 0 0 40 0v5a20 4.500 0 0 1-40 0z" fill="#40d040"/>
      <path d="M498 597a20 4.500 0 0 0 40 0v8l-40-3.500z" fill="#22ae22"/>
      <ellipse cx="518" cy="565" rx="20" ry="4.500" fill="#22cf22"/>
      <ellipse cx="518" cy="622.500" rx="20" ry="4.500" fill="#40df40"/>
      <path d="M496 463l6 2v27l-6 5z" fill="#22e022"/>
      <path d="M502 465l32-2v33h-32z" fill="#66e666"/>
      <path d="M496 463l5-3 33 3-5 4-33-4z" fill="#66b266"/>
      <ellipse cx="517.500" cy="505" rx="29" ry="27" fill="#38ea38"/>
      <path d="M490 500Q495 490 508 487 522 487 529 495L534 486Q548 500 545 514L518 507 497 524Q488 512 490 500z" fill="#64e064"/>
      <path d="M497 490Q510 475 533 485L528 495Q518 484 497 490z" fill="#22e422"/>
      <path d="M518 507L497 524Q490 518 490 510z" fill="#34cc34" fill-opacity=".8"/>
      <path d="M518 507L545 515Q540 531 517 532 505 531 497 524z" fill="#40ff40"/>
      <path d="M527 524Q540 520 541 512L547 512Q545 518 541 524 539 530 534 529.500z" fill="#30d830"/>
      <path class="cross" d="M488 ${edge - 2.500}L547 ${edge + 2.500}"/>
      <path class="thin" d="M538 478L548 461 568 503 577 484M598.500 464V506"/>
    </g>`;
  }

  render() {
    return html`<svg viewBox="369 101 1549 915" preserveAspectRatio="xMinYMin slice" role="img" aria-label="Modèle 3D">
      ${svg`
      <path d="M1647 300v60a20 4.500 0 0 0 40 0v-60z" fill="#80ff80"/>
      <ellipse cx="1667" cy="360" rx="19.500" ry="4.500" fill="#40df40"/>
      <path d="M1655 339L1705 342V349L1650 345z" fill="#60f860"/>
      <path d="M1660 339L1705 342.500" stroke="#22b022" stroke-width="1.200"/>
      <path d="M1690 314L1743 317.500V324L1685 320z" fill="#80ff80"/>
      <path d="M1700 314.500L1743 318" stroke="#22b022" stroke-width="1.200"/>
      <path d="M1730 288L1742 294 1703 320 1690 320z" fill="#40df40"/>
      <path d="M406 446L882 127 1332 163 855 483z" fill="#6e6e6e"/>
      <path d="M406 446L855 483V529L406 491z" fill="#cdcdcd"/>
      <path d="M855 472L1332 153 1779 191 1303 509z" fill="#6e6e6e"/>
      <path d="M855 472L1303 509V578L855 541z" fill="#cdcdcd"/>
      <path d="M1303 509L1779 191V259L1303 578z" fill="#a6a6a6"/>
      <path d="M821 532L829 527 855 529V536z" fill="#555"/>
      <path d="M888 544V607L972 551z" fill="#969696"/>
      <path d="M821 532L855 535V541L888 544V607L821 602z" fill="#dc0000"/>
      <path d="M856 535L877 541 856 538zM874 537L888 538V542z" fill="#dc0000"/>
      <path class="edge" d="M1316 163L882 127 406 446 855 483M406 446V491L855 529"/>
      <path class="edge" d="M855 472L1332 153 1779 191 1303 509zM855 472V541L1303 578V509M1303 578L1779 259V191"/>
      <path d="M1303 544L1779 225" stroke="#111" stroke-width="1.200"/>
      <path d="M854.500 542V569" stroke="#000" stroke-width="1.200"/>
      ${this.support(0, 0, 501)}${this.support(224, 19, 501)}${this.support(448, 38, 512)}${this.support(673, 56, 513)}
      <path class="thin" d="M406 469L855 506 1303 544"/>
      <path d="M404.500 467h3v3h-3zM853 505h3v3h-3zM1302 542h3v3h-3zM1778 223.500h3v3h-3z" fill="#600"/>
      <path d="M880.500 148.500h3v3h-3z" fill="#e00"/>
      <g class="shade"><path d="M848 616L843.500 649 835.700 644 794 705a5 5 0 0 1-8.500-6L826.700 638 819 633z" fill="#fc4444"/></g>
      `}
    </svg>`;
  }
}

/* ---------- application window ---------- */
const menus: [string, string, string][] = [
  ["Fic", "h", "ier"],
  ["", "M", "odifier"],
  ["", "A", "fficher"],
  ["", "I", "nsérer"],
  ["", "C", "alculer"],
  ["", "R", "ésultats"],
  ["", "O", "utils"],
  ["", "T", "ableau"],
  ["O", "p", "tions"],
  ["Mod", "u", "les additionnels"],
  ["", "F", "enêtre"],
  ["Ai", "d", "e"],
];

@customElement("app-root")
export class AppRoot extends LitElement {
  @state() private tab = 1;

  static styles = css`
    :host {
      display: flex;
      flex-direction: column;
      min-height: 100vh;
      background: #d0d4dd;
      font: 11px/16px "Noto Sans", "Open Sans", sans-serif;
      color: #4b4f5c;
    }
    button {
      font: inherit;
      color: inherit;
      border: 0;
      background: none;
      padding: 0;
    }
    .title {
      display: flex;
      align-items: center;
      height: 23px;
      padding-right: 1px;
      background: #0078d7;
      color: #fff;
    }
    .title .logo {
      width: 18px;
      height: 18px;
      margin: 0 4px 0 1px;
    }
    .title h1 {
      margin: 0;
      font-size: 11px;
      font-weight: 400;
      flex: 1;
    }
    .title button {
      width: 46px;
      height: 20px;
      display: grid;
      place-items: center;
      align-self: flex-start;
    }
    .title button svg {
      width: 12px;
      height: 12px;
      fill: none;
      stroke: #fff;
    }
    .menu {
      display: flex;
      align-items: center;
      height: 24px;
      box-sizing: border-box;
      padding: 0 6px 1px 4px;
      background: #d0d4dd;
    }
    .dots {
      width: 6px;
      height: 14px;
      background: radial-gradient(circle, #a5a9b4 1px, transparent 2px) 0 0 / 3px 4px repeat-y;
    }
    .bridge {
      width: 16px;
      height: 13px;
      margin-right: 10px;
    }
    .entries {
      display: flex;
      gap: 15px;
      flex: 1;
    }
    .mdi {
      display: flex;
      gap: 6px;
    }
    .mdi svg {
      width: 10px;
      height: 10px;
      display: block;
    }
    .bar {
      display: flex;
      gap: 2px;
      height: 26px;
    }
    .main {
      flex: 1;
      display: flex;
      min-height: 0;
    }
    .side {
      width: 363px;
      flex: none;
      display: flex;
      flex-direction: column;
      margin-right: 4px;
    }
    .head {
      display: flex;
      align-items: center;
      gap: 10px;
      height: 20px;
      padding: 0 6px 0 4px;
      background: #e6ebf5;
      border-bottom: 1px solid #9da1ad;
      box-sizing: border-box;
    }
    .head h2 {
      margin: 0;
      font-size: 11px;
      font-weight: 400;
      flex: 1;
    }
    .head svg {
      width: 8px;
      height: 8px;
      display: block;
    }
    .well {
      flex: 1;
      display: flex;
      padding: 0 2px 0 2px;
      background: #e6ebf5;
      border-right: 1px solid #8e929d;
      border-bottom: 1px solid #8e929d;
    }
    nav-tree {
      flex: 1;
    }
    .tabs {
      display: flex;
      align-items: flex-start;
      gap: 7px;
      height: 23px;
      padding-left: 4px;
    }
    .tabs button {
      display: flex;
      align-items: center;
      gap: 2px;
      height: 20px;
      padding: 0 2px;
    }
    .tabs button.on {
      background: #e3e7ee;
      box-shadow: inset 0 0 0 1px #f6f9fb;
      border-radius: 0 0 3px 3px;
    }
    .tabs svg {
      width: 16px;
      height: 16px;
    }
    model-view {
      flex: 1;
      margin-bottom: 1px;
    }
    .status {
      display: grid;
      grid-template-columns: 1fr auto 188px 88px 74px 74px 72px;
      height: 21px;
      box-sizing: border-box;
      border-top: 1px solid #9fa3ac;
      background: linear-gradient(#eceef2, #b9bec9 30%, #a8acb6 55%, #b3b6c0 75%, #bcbfc8);
      color: #2a2d34;
    }
    .status > span {
      border-left: 1px solid #9b9ea7;
      margin-top: 3px;
    }
    .status > .free {
      border: 0;
    }
    .keys {
      display: flex;
      gap: 2px;
      padding-top: 1px;
      margin-right: 2px;
    }
    .keys button {
      height: 19px;
      padding: 0 2px;
      line-height: 15px;
      display: flex;
      border: 1px solid;
      border-color: #f4f4f6 #8c8f98 #8c8f98 #f4f4f6;
    }
    .keys .in {
      border-color: #000 #fff #fff #000;
    }
    .keys .wide {
      padding: 0 9px;
    }
  `;

  render() {
    const tabs: [string, string][] = [
      ["Données", "data"],
      ["Afficher", "show"],
      ["Vues", "views"],
    ];
    return html`
      <header class="title">
        <svg class="logo" viewBox="0 0 18 18" aria-hidden="true">
          <path d="M5 7l4-5 7 3 1 7-5 5-6-3z" fill="#6d7787" stroke="#20262f" />
          <path d="M7 6l4-2 4 2-3 4zM8 12l4 2 3-4" fill="#a4afc0" stroke="#2c3440" stroke-width=".8" />
          <text x="1" y="16" font-size="11" font-weight="700" font-family="Liberation Sans, sans-serif" fill="#f6c11c" stroke="#40320a" stroke-width=".3">5</text>
        </svg>
        <h1>RFEM 5.22.03 x64 Trial - [rfem-file*]</h1>
        <button aria-label="Réduire"><svg viewBox="0 0 12 12"><path d="M1 6.500h10" /></svg></button>
        <button aria-label="Restaurer"><svg viewBox="0 0 12 12"><path d="M1.500 3.500h7v8h-7zM3.500 3.500v-2h7v7h-2" /></svg></button>
        <button aria-label="Fermer"><svg viewBox="0 0 12 12"><path d="M1 1l10 10M11 1L1 11" /></svg></button>
      </header>
      <nav class="menu">
        <span class="dots"></span>
        <svg class="bridge" viewBox="0 0 16 13" aria-hidden="true">
          <path d="M0 0h16v13H0z" fill="#1c2457" />
          <path d="M0 8h16M1 8L5 2.500 8.500 8M5 2v9M8.500 8V5M8.500 5L14 8" fill="none" stroke="#fff" stroke-width="1.200" />
        </svg>
        <div class="entries">${menus.map(([a, k, b]) => html`<button>${a}<u>${k}</u>${b}</button>`)}</div>
        <div class="mdi">
          <button aria-label="Réduire le document"><svg viewBox="0 0 10 10"><path d="M2 7.500h7" stroke="#666" stroke-width="2" /><path d="M2 9h7" stroke="#fff" /></svg></button>
          <button aria-label="Restaurer le document"><svg viewBox="0 0 10 10"><path d="M1 3.500h7v4H1zM3 3V1.500h6.500V6H8" fill="none" stroke="#888" /><path d="M3 1.500h7M1 3.500h7" stroke="#666" /><path d="M1 9h8" stroke="#fff" /></svg></button>
          <button aria-label="Fermer le document"><svg viewBox="0 0 10 10"><path d="M2 1l6 7M8 1L2 8" stroke="#777" stroke-width="2" /><path d="M0 9h4M6 9h4" stroke="#fff" /></svg></button>
        </div>
      </nav>
      ${strips.map((row) => html`<div class="bar">${row.map((tools) => html`<tool-strip .tools=${tools}></tool-strip>`)}</div>`)}
      <div class="main">
        <aside class="side">
          <div class="head">
            <h2>Navigateur de projet - Afficher</h2>
            <button aria-label="Épingler"><svg viewBox="0 0 8 8"><path d="M2.500 0v5M5.500 0v5M2 .5h4M0 5h8M4 5v3" fill="none" stroke="#555" /></svg></button>
            <button aria-label="Fermer le panneau"><svg viewBox="0 0 8 8"><path d="M.5.5l7 7M7.500.5l-7 7" stroke="#555" stroke-width="1.300" /></svg></button>
          </div>
          <div class="well"><nav-tree></nav-tree></div>
          <div class="tabs" role="tablist">
            ${tabs.map(
              ([name, icon], i) => html`<button role="tab" class=${classMap({ on: i === this.tab })} @click=${() => (this.tab = i)}>
                <svg viewBox="0 0 16 16" aria-hidden="true">${treeArt[icon]}</svg>${name}
              </button>`,
            )}
          </div>
        </aside>
        <model-view></model-view>
      </div>
      <footer class="status">
        <span class="free"></span>
        <div class="keys">
          <button>SAISIE</button>
          <button>GRILLE</button>
          <button class="in wide">ORTHO</button>
          <button class="in">SAISIE D'OB.</button>
          <button class="in">GLIGNES</button>
          <button class="in">DXF</button>
        </div>
        <span></span><span></span><span></span><span></span><span></span>
      </footer>
    `;
  }
}
